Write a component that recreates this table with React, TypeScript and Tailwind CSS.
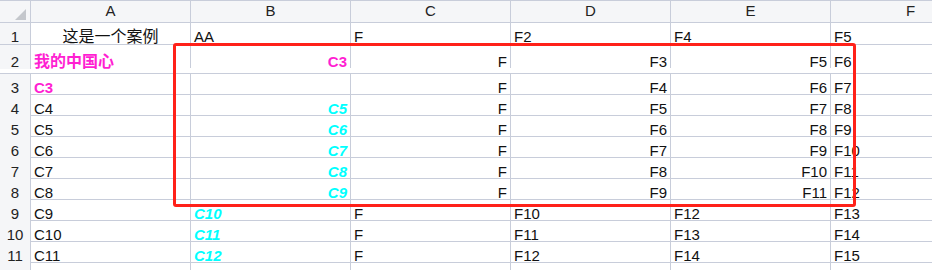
import React from "react";

type Cell = { t?: string; a?: "l" | "r" | "c"; s?: "pink" | "cyan" };
type Row = { n: number; h: string; pb?: string; cells: Cell[] };

const cols = ["A", "B", "C", "D", "E", "F"];

// rows 2-8 are right aligned in B..E, F column stays left
const mid = (n: number, b: string, d: string, e: string, f: string): Cell[] => [
  { t: `C${n}` },
  { t: b, a: "r", s: "cyan" },
  { t: "F", a: "r" },
  { t: d, a: "r" },
  { t: e, a: "r" },
  { t: f },
];

const low = (n: number, b: string, d: string, e: string, f: string): Cell[] => [
  { t: `C${n}` },
  { t: b, s: "cyan" },
  { t: "F" },
  { t: d },
  { t: e },
  { t: f },
];

const rows: Row[] = [
  {
    n: 1,
    h: "h-[22px]",
    pb: "pb-[1px]",
    cells: [
      { t: "这是一个案例", a: "c" },
      { t: "AA" },
      { t: "F" },
      { t: "F2" },
      { t: "F4" },
      { t: "F5" },
    ],
  },
  {
    n: 2,
    h: "h-[29px]",
    pb: "pb-[5px]",
    cells: [
      { t: "我的中国心", s: "pink" },
      { t: "C3", a: "r", s: "pink" },
      { t: "F", a: "r" },
      { t: "F3", a: "r" },
      { t: "F5", a: "r" },
      { t: "F6" },
    ],
  },
  {
    n: 3,
    h: "h-[21px]",
    cells: [
      { t: "C3", s: "pink" },
      {},
      { t: "F", a: "r" },
      { t: "F4", a: "r" },
      { t: "F6", a: "r" },
      { t: "F7" },
    ],
  },
  { n: 4, h: "h-[21px]", cells: mid(4, "C5", "F5", "F7", "F8") },
  { n: 5, h: "h-[21px]", cells: mid(5, "C6", "F6", "F8", "F9") },
  { n: 6, h: "h-[21px]", cells: mid(6, "C7", "F7", "F9", "F10") },
  { n: 7, h: "h-[21px]", cells: mid(7, "C8", "F8", "F10", "F11") },
  { n: 8, h: "h-[21px]", cells: mid(8, "C9", "F9", "F11", "F12") },
  { n: 9, h: "h-[21px]", cells: low(9, "C10", "F10", "F12", "F13") },
  { n: 10, h: "h-[21px]", cells: low(10, "C11", "F11", "F13", "F14") },
  { n: 11, h: "h-[21px]", cells: low(11, "C12", "F12", "F14", "F15") },
];

const line = "border-[#c8cdda]";

function CellView({ c }: { c: Cell }) {
  const align =
    c.a === "r" ? "justify-end" : c.a === "c" ? "justify-center" : "justify-start";
  const cjk = !!c.t && /[\u4e00-\u9fff]/.test(c.t);
  const tone =
    c.s === "pink"
      ? "text-[#ff1fd2] font-bold"
      : c.s === "cyan"
        ? "text-[#00ffff] font-bold italic"
        : "text-[#111]";
  return (
    <div
      className={`flex w-[160px] shrink-0 items-end ${align} border-r ${line} px-[3px] whitespace-nowrap`}
    >
      <span className={`${tone} ${cjk ? "text-[16px]" : "text-[15px]"} leading-[12px]`}>
        {c.t}
      </span>
    </div>
  );
}

export default function App() {
  return (
    <div className="relative w-[932px] h-[270px] overflow-hidden bg-white font-['Liberation_Sans','Noto_Sans_CJK_SC',sans-serif]">
      <div className={`w-[991px] border-t ${line}`}>
        {/* column headers */}
        <div className={`flex h-[22px] border-b ${line} bg-[#f5f6f8]`}>
          <div className={`relative w-[31px] shrink-0 border-r ${line}`}>
            <svg className="absolute left-[15px] top-[8px]" width="11" height="11" viewBox="0 0 11 11">
              <polygon points="11,0 11,11 0,11" fill="#c4c7cc" />
            </svg>
          </div>
          {cols.map((c) => (
            <div
              key={c}
              className={`flex w-[160px] shrink-0 items-center justify-center border-r ${line} text-[15px] text-[#222]`}
            >
              {c}
            </div>
          ))}
        </div>

        {rows.map((r) => (
          <div key={r.n} className={`flex ${r.h} border-b ${line} ${r.pb ?? ""}`}>
            <div
              className={`flex w-[31px] shrink-0 items-end justify-center border-r ${line} bg-[#f5f6f8] -mb-[1px]`}
            >
              <span className="text-[15px] leading-[12px] text-[#222] mb-[1px]">{r.n}</span>
            </div>
            {r.cells.map((c, i) => (
              <CellView key={i} c={c} />
            ))}
          </div>
        ))}

        {/* row 12, only its top edge shows */}
        <div className="flex h-[21px]">
          <div className={`w-[31px] shrink-0 border-r ${line} bg-[#f5f6f8]`} />
          {cols.map((c) => (
            <div key={c} className={`w-[160px] shrink-0 border-r ${line}`} />
          ))}
        </div>
      </div>

      {/* selection outline */}
      <div className="absolute left-[173px] top-[43px] w-[683px] h-[164px] border-[3px] border-[#ff2119] rounded-[3px]" />
    </div>
  );
}
